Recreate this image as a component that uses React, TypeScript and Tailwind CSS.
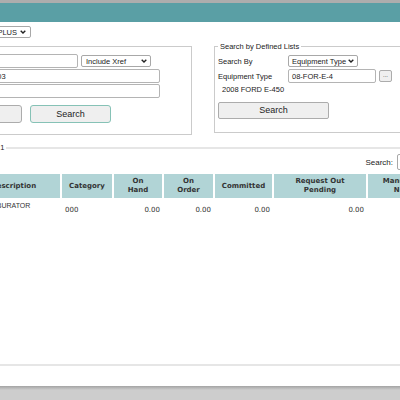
import React from 'react';

function Chevron() {
  return (
    <svg width="6" height="4" viewBox="0 0 6 4" className="shrink-0">
      <polyline points="0.7,0.7 3,3 5.3,0.7" fill="none" stroke="#222" strokeWidth="1.4" />
    </svg>
  );
}

function Select({ label, className }: { label: string; className: string }) {
  return (
    <div className={`flex items-center justify-between h-[12px] pl-[3px] pr-[3px] border border-[#a8a8a8] rounded-[2px] bg-white shrink-0 ${className}`}>
      <span className="whitespace-nowrap">{label}</span>
      <Chevron />
    </div>
  );
}

function Input({ value, className }: { value?: string; className: string }) {
  return (
    <div className={`flex items-center h-[14px] px-[3px] border border-[#b4b4b4] rounded-[2px] bg-white shrink-0 whitespace-nowrap overflow-hidden ${className}`}>
      {value}
    </div>
  );
}

const cols = [
  { key: 'desc', label: <>Description</>, w: 'w-[95px]' },
  { key: 'cat', label: <>Category</>, w: 'w-[52px]' },
  { key: 'hand', label: <>On<br />Hand</>, w: 'w-[50px]' },
  { key: 'order', label: <>On<br />Order</>, w: 'w-[51px]' },
  { key: 'comm', label: <>Committed</>, w: 'w-[59px]' },
  { key: 'req', label: <>Request Out<br />Pending</>, w: 'w-[94px]' },
  { key: 'manu', label: <>Manufacturer<br />Number</>, w: 'w-[84px]' },
];

export default function App() {
  return (
    <div className="w-[400px] h-[400px] overflow-hidden bg-white flex flex-col font-['Liberation_Sans',Arial,sans-serif] text-[7.5px] leading-[9px] text-[#222]">
      <div className="h-[3px] bg-[#adadad] shrink-0" />
      <div className="h-[19px] bg-[#5a9fa5] shrink-0" />

      {/* supplier select */}
      <div className="mt-[4px] h-[12px] flex shrink-0">
        <div className="-ml-[30px] w-[61px] h-[12px] flex items-center justify-end gap-[3px] pr-[4px] border border-[#a8a8a8] rounded-[2px]">
          <span>PLUS</span>
          <Chevron />
        </div>
      </div>

      {/* search panels */}
      <div className="mt-[4px] flex items-start shrink-0">
        <fieldset className="-ml-[150px] w-[342px] shrink-0 border border-[#cbcbcb] pl-[9px] pt-[3px] pb-[11px]">
          <legend className="px-[2px]">Search by Part</legend>
          <div className="flex flex-col gap-[1px]">
            <div className="flex items-center">
              <span className="w-[100px]">Part Number</span>
              <Input className="w-[118px]" />
              <Select label="Include Xref" className="ml-[3px] w-[70px] pl-[4px]" />
            </div>
            <div className="flex items-center">
              <span className="w-[100px]">Vendor</span>
              <Input className="w-[200px]" value="0000000003" />
            </div>
            <div className="flex items-center">
              <span className="w-[100px]">Description</span>
              <Input className="w-[200px]" />
            </div>
          </div>
          <div className="flex gap-[8px] ml-[62px] mt-[7px]">
            <button className="w-[100px] h-[18px] bg-[#efefef] border border-[#acacac] rounded-[3px] text-[9px]">Clear</button>
            <button className="w-[81px] h-[18px] bg-[#efefef] border-[1.5px] border-[#86c2b6] rounded-[3px] text-[9px]">Search</button>
          </div>
        </fieldset>

        <fieldset className="ml-[22px] w-[220px] shrink-0 border border-[#cbcbcb] pl-[3px] pt-[4px] pb-[13px]">
          <legend className="px-[2px]">Search by Defined Lists</legend>
          <div className="flex items-center h-[12px]">
            <span className="w-[70px]">Search By</span>
            <Select label="Equipment Type" className="w-[70px]" />
          </div>
          <div className="flex items-center mt-[2px]">
            <span className="w-[70px]">Equipment Type</span>
            <Input className="w-[88px]" value="08-FOR-E-4" />
            <button className="ml-[3px] w-[13px] h-[12px] bg-[#efefef] border border-[#acacac] rounded-[2px] text-[6px] leading-[6px] pb-[2px]">...</button>
          </div>
          <div className="mt-[1px] h-[10px] flex items-center pl-[4px]">2008 FORD E-450</div>
          <button className="mt-[8px] w-[111px] h-[17px] bg-[#efefef] border border-[#acacac] rounded-[2px] text-[9px]">Search</button>
        </fieldset>
      </div>

      {/* results */}
      <fieldset className="mt-[8px] -ml-[80px] w-[620px] flex-1 min-h-0 shrink-0 border-2 border-[#e6e6e6] pl-[43px]">
        <legend className="ml-[4px] px-[2px] whitespace-nowrap">Results: 1</legend>
        <div className="mt-[2px] w-[485px] h-[16px] flex items-center justify-end">
          <span className="text-[8px] mr-[4px]">Search:</span>
          <div className="w-[53px] h-[16px] border border-[#a8a8a8] rounded-[2px]" />
        </div>
        <table className="mt-[4px] w-[485px] table-fixed border-collapse font-['Verdana','DejaVu_Sans',sans-serif] text-[7px] text-[#333]">
          <colgroup>
            {cols.map((c) => (
              <col key={c.key} className={c.w} />
            ))}
          </colgroup>
          <thead>
            <tr className="h-[24px]">
              {cols.map((c) => (
                <th key={c.key} className="bg-[#b1d4d6] border-l-2 border-white font-bold leading-[9px] text-center align-middle">
                  {c.label}
                </th>
              ))}
            </tr>
          </thead>
          <tbody>
            <tr className="h-[24px]">
              <td className="align-top pt-[3px] pl-[16px] font-['Liberation_Sans',Arial,sans-serif]">CARBURATOR</td>
              <td className="pl-[4px]">000</td>
              <td className="text-right pr-[3px]">0.00</td>
              <td className="text-right pr-[3px]">0.00</td>
              <td className="text-right pr-[3px]">0.00</td>
              <td className="text-right pr-[3px]">0.00</td>
              <td />
            </tr>
          </tbody>
        </table>
      </fieldset>

      <div className="h-[20px] shrink-0" />
      <div className="h-[14px] shrink-0 bg-[linear-gradient(#a3a3a3,#cdcdcd_4px)]" />
    </div>
  );
}
